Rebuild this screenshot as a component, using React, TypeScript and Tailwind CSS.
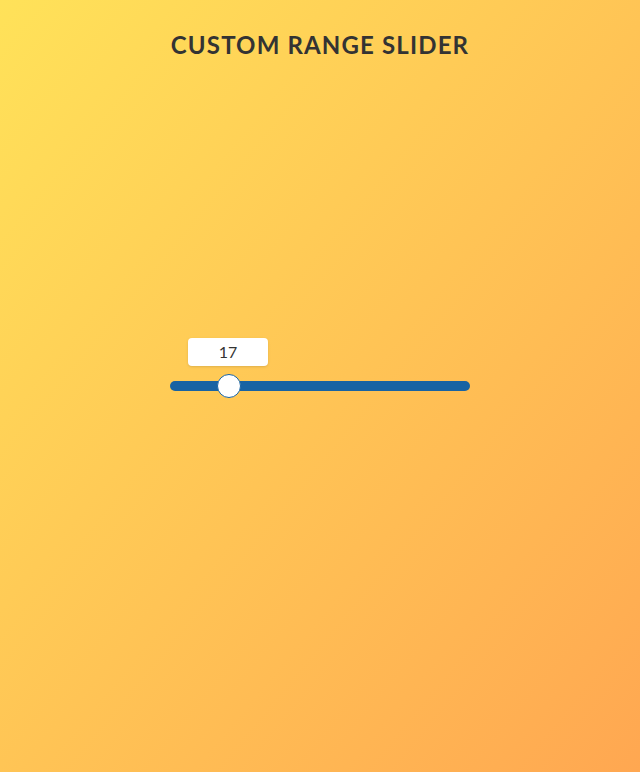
import { useState } from "react"

export default function App() {
  const [value, setValue] = useState(17)
  // thumb is 24px on a 300px track, the bubble follows its centre
  const left = 12 + (value / 100) * 276 - 41

  return (
    <div
      className="h-screen w-full flex flex-col bg-gradient-to-br from-[#ffe259] to-[#ffa751] text-[#333]"
      style={{ fontFamily: "Lato, 'Open Sans', sans-serif" }}
    >
      <h1 className="h-[90px] pt-[30px] text-center text-[24px] font-bold leading-[30px] tracking-[0.048em] uppercase">
        Custom Range Slider
      </h1>
      <div className="flex-1 flex items-center justify-center">
        <div className="relative w-[300px]">
          <div
            className="absolute -top-[43px] w-20 h-7 rounded bg-white shadow-sm flex items-center justify-center text-[16px]"
            style={{ left }}
          >
            {value}
          </div>
          <input
            type="range"
            min={0}
            max={100}
            value={value}
            onChange={(e) => setValue(Number(e.target.value))}
            className="block w-[300px] h-[10px] appearance-none rounded-[5px] bg-[#1863a3] outline-none cursor-pointer [&::-webkit-slider-thumb]:appearance-none [&::-webkit-slider-thumb]:w-6 [&::-webkit-slider-thumb]:h-6 [&::-webkit-slider-thumb]:rounded-full [&::-webkit-slider-thumb]:bg-white [&::-webkit-slider-thumb]:border [&::-webkit-slider-thumb]:border-[#1863a3]"
          />
        </div>
      </div>
      <div className="h-[90px]" />
    </div>
  )
}
